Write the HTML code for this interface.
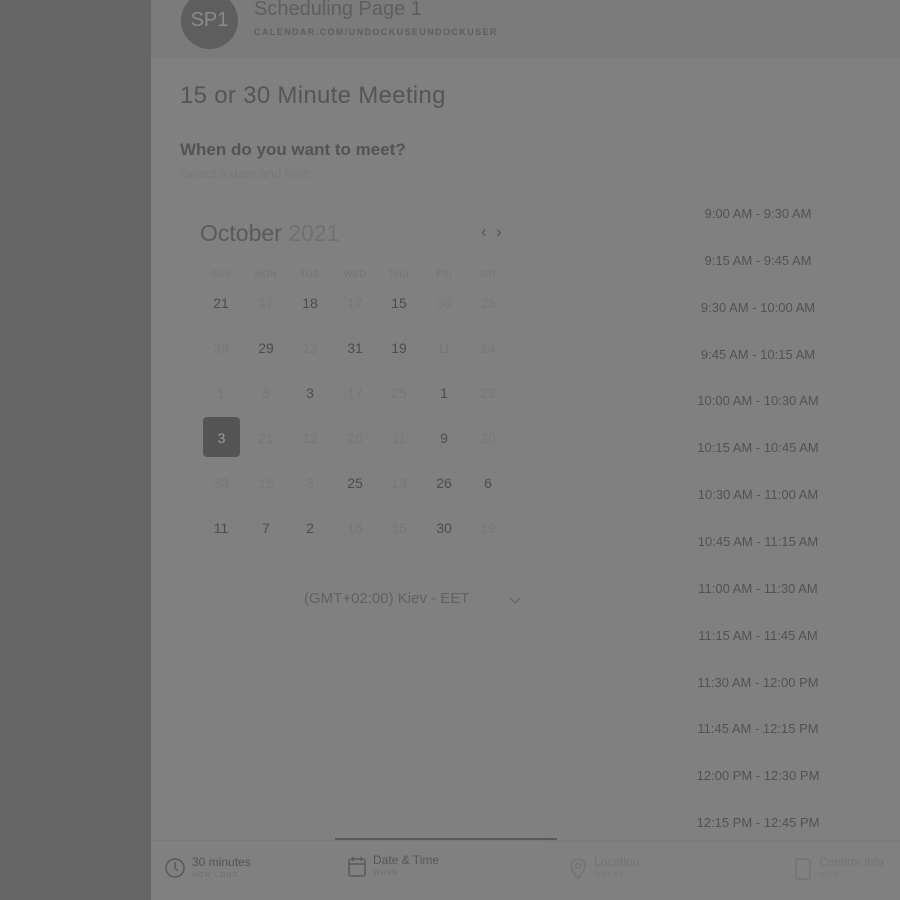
<!DOCTYPE html>
<html><head><meta charset="utf-8"><style>
*{margin:0;padding:0;box-sizing:border-box}
body{width:900px;height:900px;overflow:hidden;background:#808080;font-family:"Liberation Sans","DejaVu Sans",sans-serif;position:relative;color:#4c4c4c}
.left{position:absolute;left:0;top:0;width:151px;height:900px;background:#666}
.hdr{position:absolute;left:151px;top:0;width:749px;height:58px;background:#7b7b7b}
.av{position:absolute;left:181px;top:-8px;width:57px;height:57px;border-radius:50%;background:#5e5e5e;color:#8a8a8a;font-size:20px;text-align:center;line-height:57px}
.t{position:absolute;white-space:nowrap}
.cal{position:absolute;left:181px;top:195px;width:349px;height:370px;border:1px solid #7d7d7d}
.d{position:absolute;width:40px;text-align:center;font-size:14px;transform:translate(-50%,-50%)}
.dim{color:#777}
.dn{font-size:9px;color:#747474;letter-spacing:.5px}
.slot{position:absolute;left:548px;width:360px;height:40px;border:1px solid #7d7d7d;font-size:13px;color:#525252;text-align:center;line-height:38px;padding-left:60px}
.sel{position:absolute;left:203px;top:417px;width:37px;height:40px;background:#555;border-radius:4px;color:#999;font-size:14px;text-align:center;line-height:42px}
</style></head><body>
<div class="left"></div>
<div class="hdr"></div>
<div class="av">SP1</div>
<div class="t" style="left:254px;top:-2px;font-size:20px;color:#5e5e5e">Scheduling Page 1</div>
<div class="t" style="left:254px;top:27px;font-size:9px;font-weight:bold;color:#5e5e5e;letter-spacing:1.4px">CALENDAR.COM/UNDOCKUSEUNDOCKUSER</div>
<div class="t" style="left:180px;top:82px;font-size:24px;color:#555;letter-spacing:.3px">15 or 30 Minute Meeting</div>
<div class="t" style="left:180px;top:140px;font-size:17px;font-weight:bold;color:#535353">When do you want to meet?</div>
<div class="t" style="left:180px;top:166px;font-size:13px;color:#787878">Select a date and time</div>
<div class="cal"></div>
<div class="t" style="left:200px;top:220px;font-size:23px;color:#5a5a5a">October <span style="color:#707070">2021</span></div>
<div class="t" style="left:481px;top:222px;font-size:17px;color:#555">‹ &nbsp;›</div>
<div id="g"></div>
<div class="sel">3</div>
<div class="t" style="left:304px;top:590px;font-size:15px;color:#616161">(GMT+02:00) Kiev - EET</div>
<svg style="position:absolute;left:508px;top:595px" width="14" height="10" viewBox="0 0 14 10" fill="none" stroke="#666" stroke-width="1.3"><path d="M2 3l5 5 5-5"/></svg>
<div id="s"></div>
<div style="position:absolute;left:335px;top:838px;width:222px;height:3px;background:#5a5a5a"></div>
<div style="position:absolute;left:151px;top:840px;width:749px;height:1px;background:#7a7a7a"></div>
<svg style="position:absolute;left:164px;top:857px" width="22" height="22" viewBox="0 0 22 22" fill="none" stroke="#595959" stroke-width="1.5"><circle cx="11" cy="11" r="9"/><path d="M11 5v6l3 3"/></svg>
<div class="t" style="left:192px;top:855px;font-size:12px;color:#535353">30 minutes</div>
<div class="t" style="left:192px;top:872px;font-size:7px;color:#6e6e6e;letter-spacing:1px">HOW LONG</div>
<svg style="position:absolute;left:347px;top:855px" width="20" height="24" viewBox="0 0 20 24" fill="none" stroke="#595959" stroke-width="1.5"><rect x="2" y="4" width="16" height="17" rx="2"/><path d="M2 9h16M6 2v4M14 2v4"/></svg>
<div class="t" style="left:373px;top:853px;font-size:12px;color:#555">Date &amp; Time</div>
<div class="t" style="left:373px;top:870px;font-size:7px;color:#6e6e6e;letter-spacing:1px">WHEN</div>
<svg style="position:absolute;left:569px;top:857px" width="18" height="24" viewBox="0 0 18 24" fill="none" stroke="#737373" stroke-width="1.5"><path d="M9 22C4 15 2 12 2 9a7 7 0 0 1 14 0c0 3-2 6-7 13z"/><circle cx="9" cy="9" r="2.5"/></svg>
<div class="t" style="left:594px;top:855px;font-size:12px;color:#737373">Location</div>
<div class="t" style="left:594px;top:872px;font-size:7px;color:#767676;letter-spacing:1px">WHERE</div>
<svg style="position:absolute;left:793px;top:857px" width="20" height="24" viewBox="0 0 20 24" fill="none" stroke="#737373" stroke-width="1.5"><rect x="3" y="2" width="14" height="20" rx="2"/></svg>
<div class="t" style="left:819px;top:855px;font-size:12px;color:#737373">Confirm info</div>
<div class="t" style="left:819px;top:872px;font-size:7px;color:#767676;letter-spacing:1px">WHO</div>
<script>
var xs=[221,266,310,355,399,444,488],ys=[303,348,393,438,483,528];
var names=["SUN","MON","TUE","WED","THU","FRI","SAT"];
var rows=[["21","17d","18","17d","15","30d","25d"],["30d","29","13d","31","19","11d","14d"],["1d","8d","3","17d","25d","1","23d"],["","21d","12d","20d","11d","9","20d"],["30d","15d","3d","25","13d","26","6"],["11","7","2","16d","15d","30","19d"]];
var h="";
names.forEach(function(n,i){h+='<div class="d dn" style="left:'+xs[i]+'px;top:274px">'+n+'</div>'});
rows.forEach(function(r,j){r.forEach(function(v,i){if(!v)return;var dim=v.slice(-1)=="d";v=v.replace("d","");h+='<div class="d'+(dim?' dim':'')+'" style="left:'+xs[i]+'px;top:'+ys[j]+'px">'+v+'</div>'})});
document.getElementById("g").innerHTML=h;
var sl=["9:00 AM - 9:30 AM","9:15 AM - 9:45 AM","9:30 AM - 10:00 AM","9:45 AM - 10:15 AM","10:00 AM - 10:30 AM","10:15 AM - 10:45 AM","10:30 AM - 11:00 AM","10:45 AM - 11:15 AM","11:00 AM - 11:30 AM","11:15 AM - 11:45 AM","11:30 AM - 12:00 PM","11:45 AM - 12:15 PM","12:00 PM - 12:30 PM","12:15 PM - 12:45 PM"];
var s="";sl.forEach(function(t,i){s+='<div class="slot" style="top:'+(194+i*46.85)+'px">'+t+'</div>'});
document.getElementById("s").innerHTML=s;
</script>
</body></html>
